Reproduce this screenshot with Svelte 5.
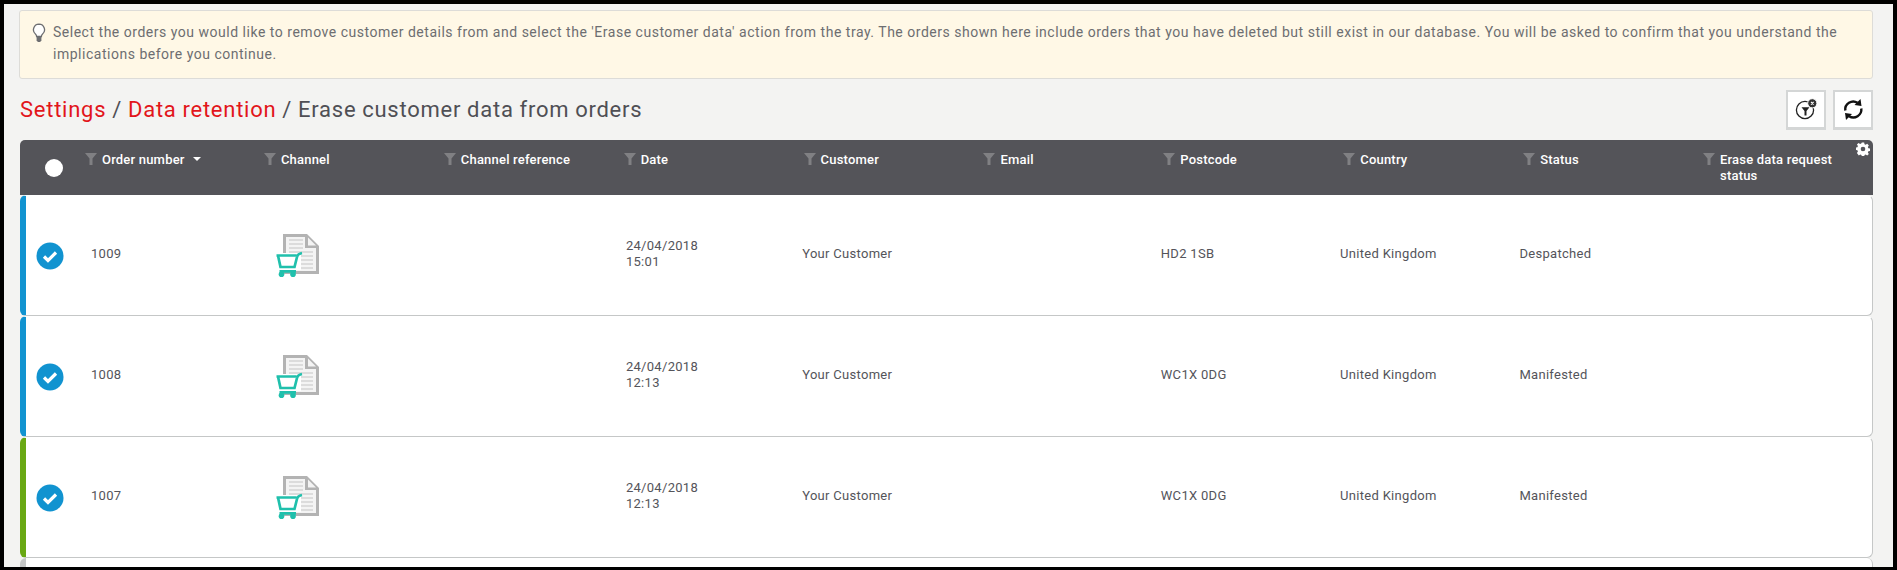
<script lang="ts">
type Order = {
  number: string;
  time: string;
  postcode: string;
  status: string;
  accent: string;
};

const columns = [
  "Order number",
  "Channel",
  "Channel reference",
  "Date",
  "Customer",
  "Email",
  "Postcode",
  "Country",
  "Status",
  "Erase data request status",
];

const orders: Order[] = [
  { number: "1009", time: "15:01", postcode: "HD2 1SB", status: "Despatched", accent: "#1193d0" },
  { number: "1008", time: "12:13", postcode: "WC1X 0DG", status: "Manifested", accent: "#1193d0" },
  { number: "1007", time: "12:13", postcode: "WC1X 0DG", status: "Manifested", accent: "#69a814" },
];
</script>

<div class="page">
  <div class="notice">
    <svg class="bulb" viewBox="0 0 14 20" width="14" height="20">
      <path d="M7 1.200a5.600 5.600 0 0 0-3.400 10c.8.7 1 1.400 1 2.300h4.800c0-.9.2-1.600 1-2.300A5.600 5.600 0 0 0 7 1.200z" fill="#fff" stroke="#6d6e71" stroke-width="1.300" />
      <path d="M4.600 14h4.800v3.200L8.200 19H5.800L4.600 17.200z" fill="#6d6e71" />
    </svg>
    <p>Select the orders you would like to remove customer details from and select the 'Erase customer data' action from the tray. The orders shown here include orders that you have deleted but still exist in our database. You will be asked to confirm that you understand the implications before you continue.</p>
  </div>

  <div class="title-row">
    <h1><span class="link">Settings</span> / <span class="link">Data retention</span> / Erase customer data from orders</h1>
    <div class="actions">
      <button aria-label="Clear filters">
        <svg viewBox="0 0 24 24" width="24" height="24">
          <circle cx="11" cy="13" r="8.600" fill="none" stroke="#222" stroke-width="1.300" />
          <path d="M7.500 10.300h8l-3 3.700v4.500h-2V14z" fill="#222" />
          <circle cx="18.300" cy="6.300" r="4.600" fill="#333" stroke="#fff" stroke-width="1" />
          <path d="M17 5l2.600 2.600m0-2.600L17 7.600" stroke="#fff" stroke-width="1.100" />
        </svg>
      </button>
      <button aria-label="Refresh">
        <svg viewBox="0 0 24 24" width="24" height="24">
          <path d="M4.300 13.500A8 8 0 0 1 16.500 5.800" fill="none" stroke="#111" stroke-width="2.400" />
          <path d="M20.300 11.500A8 8 0 0 1 8.100 19.200" fill="none" stroke="#111" stroke-width="2.400" />
          <path d="M19.500 2l1 7-7-1z" fill="#111" />
          <path d="M5 23l-1-7 7 1z" fill="#111" />
        </svg>
      </button>
    </div>
  </div>

  <div class="table">
    <div class="thead grid">
      <div class="select-cell"><span class="select-all"></span></div>
      {#each columns as column, i}
        <div class="th">
          <svg class="funnel" viewBox="0 0 12 12" width="12" height="12">
            <path d="M0 0h12L7.500 5.500V12h-3V5.500z" fill="#808083" />
          </svg>
          <span>
            {column}
            {#if i === 0}<i class="caret"></i>{/if}
          </span>
        </div>
      {/each}
      <svg class="gear" viewBox="0 0 24 24" width="14" height="14">
        <path fill="#fff" fill-rule="evenodd" d="M10 1h4l.6 3 2 .9 2.600-1.700 2.800 2.800-1.700 2.600.9 2 3 .6v4l-3 .6-.9 2 1.700 2.600-2.800 2.800-2.600-1.700-2 .9-.6 3h-4l-.6-3-2-.9-2.600 1.700L1.600 18.800l1.700-2.600-.9-2-3-.6v-4l3-.6.9-2L1.600 4.400l2.800-2.800L7 3.300l2-.9zM12 8a4 4 0 1 0 0 8 4 4 0 0 0 0-8z" />
      </svg>
    </div>

    {#each orders as order}
      <div class="row grid" style={`--accent: ${order.accent}`}>
        <div class="select-cell">
          <svg viewBox="0 0 28 28" width="28" height="28">
            <circle cx="14" cy="14" r="13.500" fill="#1193d0" />
            <path d="M8 14.500l4 4 8-8" fill="none" stroke="#fff" stroke-width="3.200" />
          </svg>
        </div>
        <div class="td number">{order.number}</div>
        <div class="td channel">
          <svg viewBox="0 0 43 43" width="43" height="43">
            <path d="M7 0h24l12 12v28H7z" fill="#b3b3b3" />
            <path d="M10 3h19v11h11v23H10z" fill="#f4f4f4" />
            <path d="M32 3.500l8 8h-8z" fill="#f4f4f4" />
            <path d="M13 6h14M13 10h14M13 14h14M13 18h24M13 22h24M25 26h12M25 30h12M25 34h12" stroke="#dcdcdc" stroke-width="2" />
            <path d="M0 19h25v17H0z" fill="#fff" />
            <path d="M.5 21.500h20M2 21.500l2.500 11.500h14L21 23c.4-1.900 2.200-3.400 5-4M3.500 37.300h16.500" fill="none" stroke="#20c0ac" stroke-width="2.700" />
            <circle cx="5.500" cy="40.200" r="2.800" fill="#20c0ac" />
            <circle cx="17" cy="40.200" r="2.800" fill="#20c0ac" />
          </svg>
        </div>
        <div class="td"></div>
        <div class="td date">24/04/2018<br />{order.time}</div>
        <div class="td">Your Customer</div>
        <div class="td"></div>
        <div class="td">{order.postcode}</div>
        <div class="td">United Kingdom</div>
        <div class="td">{order.status}</div>
        <div class="td"></div>
      </div>
    {/each}
    <div class="row-peek"></div>
  </div>
</div>

<style>
  :global(body) {
    margin: 0;
    background: #000;
  }

  .page {
    box-sizing: border-box;
    margin: 4px 4px 3px 4px;
    height: 563px;
    padding: 6px 20px 0 15px;
    background: #f3f3f2;
    overflow: hidden;
    font-family: Roboto, "Liberation Sans", sans-serif;
  }

  .notice {
    box-sizing: border-box;
    height: 69px;
    display: flex;
    gap: 7px;
    padding: 10px 12px;
    background: #fff8e6;
    border: 1px solid #dddcd8;
    border-radius: 3px;
    color: #6d6e71;
    font-size: 14px;
    line-height: 22px;
    letter-spacing: 0.515px;
  }

  .bulb {
    flex: none;
    margin-top: 2px;
  }

  .notice p {
    margin: 0;
  }

  .title-row {
    height: 61px;
    display: flex;
    align-items: center;
    justify-content: space-between;
  }

  h1 {
    margin: 0;
    padding: 0 0 1px 1px;
    font-size: 22px;
    font-weight: 400;
    letter-spacing: 0.75px;
    word-spacing: -0.3px;
    color: #4f4f55;
  }

  .link {
    color: #e2151b;
  }

  .actions {
    display: flex;
    gap: 7px;
  }

  .actions button {
    box-sizing: border-box;
    width: 40px;
    height: 40px;
    padding: 0;
    display: flex;
    align-items: center;
    justify-content: center;
    background: #fff;
    border: 2px solid #d4d6d6;
    border-bottom-width: 3px;
  }

  .grid {
    display: grid;
  }

  .table {
    margin-left: 1px;
  }

  .thead {
    position: relative;
    height: 55px;
    background: #545459;
    border-radius: 5px 5px 0 0;
    color: #fff;
    font-size: 13px;
    font-weight: 500;
    line-height: 16px;
    letter-spacing: 0.2px;
    grid-template-columns: 64px repeat(9, 179.900px) 1fr;
  }

  .th {
    display: flex;
    align-items: flex-start;
    gap: 5px;
    padding-top: 12px;
  }

  .th:nth-child(2) {
    padding-left: 1px;
  }

  .th span {
    max-width: 140px;
  }

  .funnel {
    flex: none;
    margin-top: 1px;
  }

  .caret {
    display: inline-block;
    margin: 0 0 3px 5px;
    border: 4.500px solid transparent;
    border-top-color: #fff;
    border-bottom-width: 0;
  }

  .select-cell {
    display: flex;
    align-items: center;
    padding-left: 10px;
  }

  .select-all {
    width: 18px;
    height: 18px;
    margin-left: 15px;
    margin-top: 1px;
    border-radius: 50%;
    background: #fff;
  }

  .gear {
    position: absolute;
    top: 2px;
    right: 3px;
  }

  .row {
    box-sizing: border-box;
    height: 121px;
    align-items: center;
    background: #fff;
    border: 1px solid #c5c7c7;
    border-left: 6px solid var(--accent);
    border-top-color: transparent;
    border-radius: 6px;
    color: #54545a;
    font-size: 13px;
    line-height: 16px;
    letter-spacing: 0.3px;
    grid-template-columns: 59px repeat(9, 179.300px) 1fr;
  }

  .td {
    padding-bottom: 4px;
  }

  .number {
    padding-left: 6px;
  }

  .channel {
    padding: 0 0 0 12px;
  }

  .channel svg {
    display: block;
  }

  .date {
    padding-left: 3px;
  }

  .row-peek {
    height: 20px;
    background: #fff;
    border-left: 6px solid #c5c7c7;
    border-right: 1px solid #c5c7c7;
    border-radius: 6px 6px 0 0;
  }
</style>
